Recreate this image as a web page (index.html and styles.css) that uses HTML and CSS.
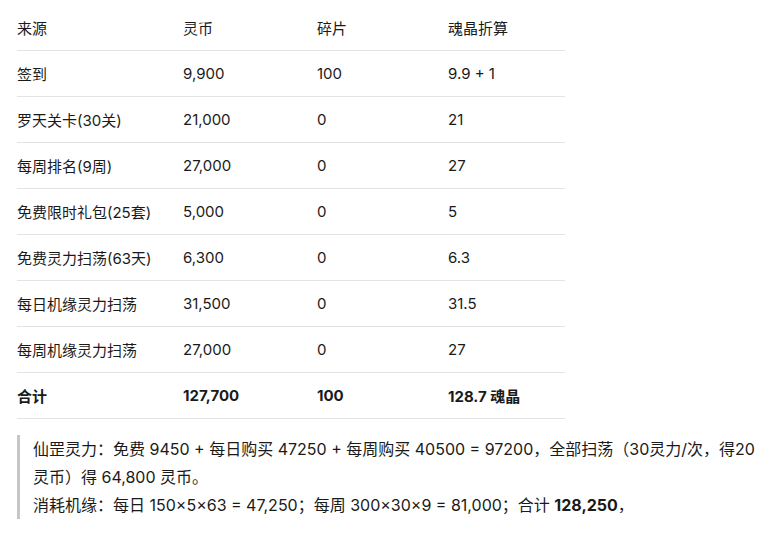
FILE: index.html
```html
<!DOCTYPE html>
<html lang="zh">
<head>
<meta charset="utf-8">
<link rel="stylesheet" href="styles.css">
</head>
<body>
<div class="page">
  <table class="tbl">
    <colgroup>
      <col class="c1"><col class="c2"><col class="c3"><col class="c4">
    </colgroup>
    <thead>
      <tr><th>来源</th><th>灵币</th><th>碎片</th><th>魂晶折算</th></tr>
    </thead>
    <tbody>
      <tr><td>签到</td><td>9,900</td><td>100</td><td>9.9 + 1</td></tr>
      <tr><td>罗天关卡(30关)</td><td>21,000</td><td>0</td><td>21</td></tr>
      <tr><td>每周排名(9周)</td><td>27,000</td><td>0</td><td>27</td></tr>
      <tr><td>免费限时礼包(25套)</td><td>5,000</td><td>0</td><td>5</td></tr>
      <tr><td>免费灵力扫荡(63天)</td><td>6,300</td><td>0</td><td>6.3</td></tr>
      <tr><td>每日机缘灵力扫荡</td><td>31,500</td><td>0</td><td>31.5</td></tr>
      <tr><td>每周机缘灵力扫荡</td><td>27,000</td><td>0</td><td>27</td></tr>
      <tr class="total"><td>合计</td><td>127,700</td><td>100</td><td>128.7 魂晶</td></tr>
    </tbody>
  </table>
  <blockquote class="note">
    <div>仙罡灵力：免费 9450 + 每日购买 47250 + 每周购买 40500 = 97200，全部扫荡（30灵力/次，得20灵币）得 64,800 灵币。</div>
    <div>消耗机缘：每日 150×5×63 = 47,250；每周 300×30×9 = 81,000；合计 <strong>128,250</strong>，</div>
  </blockquote>
</div>
</body>
</html>
```

FILE: styles.css
```css
html, body {
  margin: 0;
  padding: 0;
  background: #ffffff;
}

body {
  font-family: Inter, "Noto Sans CJK SC", sans-serif;
  font-size: 15px;
  color: #1a1a1a;
}

.page {
  padding: 5px 4px 0 17px;
}

.tbl {
  border-collapse: collapse;
  width: 548px;
  table-layout: fixed;
}

.c1 { width: 166px; }
.c2 { width: 134px; }
.c3 { width: 131px; }
.c4 { width: 117px; }

.tbl th,
.tbl td {
  height: 45px;
  padding: 0;
  text-align: left;
  vertical-align: middle;
  font-weight: 400;
  border-bottom: 1px solid #e3e3e3;
  white-space: nowrap;
}

.tbl .total td {
  font-weight: 700;
}

.note {
  margin: 16px 0 0 0;
  padding: 0 0 0 13px;
  border-left: 3px solid #c6c6c6;
  font-size: 16px;
  line-height: 28px;
}

.note strong {
  font-weight: 700;
}
```
